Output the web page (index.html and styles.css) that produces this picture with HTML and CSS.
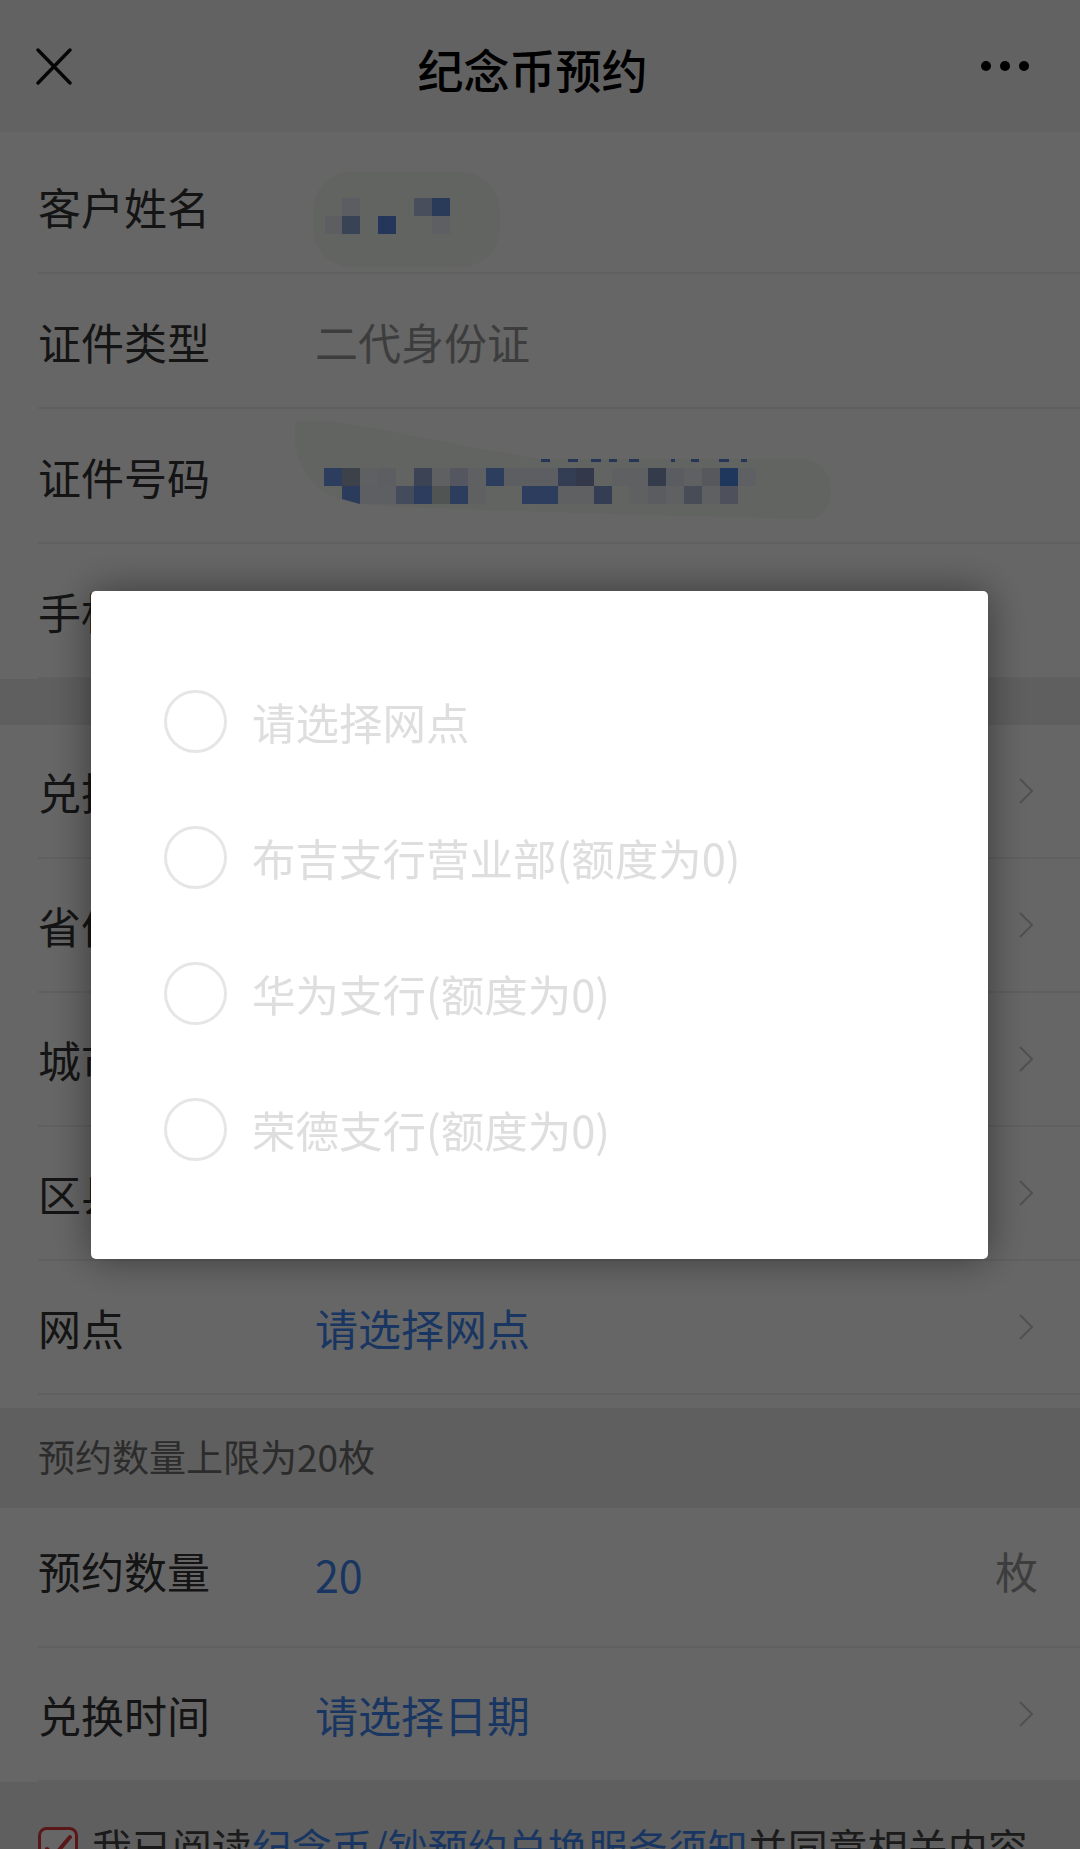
FILE: index.html
```html
<!DOCTYPE html>
<html lang="zh-CN">
<head>
<meta charset="utf-8">
<title>纪念币预约</title>
<link rel="stylesheet" href="styles.css">
</head>
<body>
<div class="page">
  <header class="nav">
    <svg class="ic-close" width="36" height="37" viewBox="0 0 36 37"><path d="M2 2 L34 35 M34 2 L2 35" stroke="#111" stroke-width="3.4" stroke-linecap="round" fill="none"/></svg>
    <h1 class="title">纪念币预约</h1>
    <svg class="ic-more" width="48" height="10" viewBox="0 0 48 10"><circle cx="5" cy="5" r="5" fill="#000"/><circle cx="24" cy="5" r="5" fill="#000"/><circle cx="43" cy="5" r="5" fill="#000"/></svg>
  </header>

  <section class="group g1">
    <div class="row">
      <span class="label">客户姓名</span>
      <svg class="redact r1" width="190" height="135" viewBox="0 0 190 135">
        <rect x="0" y="34" width="187" height="95" rx="38" fill="#f5f9f3"/>
        <rect x="29" y="60" width="18" height="18" fill="#e4e9f4"/>
        <rect x="101" y="60" width="18" height="18" fill="#b5c4e4"/>
        <rect x="119" y="60" width="18" height="18" fill="#6a93e0"/>
        <rect x="12" y="78" width="18" height="18" fill="#e6eaf3"/>
        <rect x="29" y="78" width="18" height="18" fill="#8ea8d8"/>
        <rect x="65" y="78" width="18" height="18" fill="#5a8ae0"/>
        <rect x="119" y="78" width="18" height="18" fill="#eaedf4"/>
      </svg>
    </div>
    <div class="row">
      <span class="label">证件类型</span>
      <span class="value muted">二代身份证</span>
    </div>
    <div class="row">
      <span class="label">证件号码</span>
      <svg class="redact r2" width="550" height="135" viewBox="0 0 550 135">
        <path d="M4 14 C40 6 120 30 248 51 L512 51 C545 53 550 100 522 111 C380 108 150 102 66 96 C20 88 0 55 4 14 Z" fill="#f5f9f3"/>
        <g fill="#5a86d8">
          <rect x="250" y="51" width="9" height="3"/><rect x="277" y="51" width="10" height="3"/><rect x="300" y="51" width="10" height="3"/><rect x="318" y="51" width="8" height="3"/><rect x="338" y="51" width="10" height="3"/><rect x="380" y="51" width="4" height="3"/><rect x="400" y="51" width="8" height="3"/><rect x="428" y="51" width="10" height="3"/><rect x="450" y="51" width="6" height="3"/>
        </g>
        <rect x="33" y="60" width="18" height="18" fill="#6e98e8"/>
        <rect x="51" y="60" width="18" height="18" fill="#98a2b8"/>
        <rect x="69" y="60" width="18" height="18" fill="#eceff6"/>
        <rect x="87" y="60" width="18" height="18" fill="#e6eaf3"/>
        <rect x="123" y="60" width="18" height="18" fill="#94a7d1"/>
        <rect x="141" y="60" width="18" height="18" fill="#eceff6"/>
        <rect x="159" y="60" width="18" height="18" fill="#d2daee"/>
        <rect x="177" y="60" width="18" height="18" fill="#eceff6"/>
        <rect x="195" y="60" width="18" height="18" fill="#6e98e8"/>
        <rect x="213" y="60" width="18" height="18" fill="#e8ecf5"/>
        <rect x="231" y="60" width="18" height="18" fill="#e8ecf5"/>
        <rect x="249" y="60" width="18" height="18" fill="#e8ecf5"/>
        <rect x="267" y="60" width="18" height="18" fill="#7f9bd2"/>
        <rect x="285" y="60" width="18" height="18" fill="#7f8fb8"/>
        <rect x="321" y="60" width="18" height="18" fill="#eceff6"/>
        <rect x="339" y="60" width="18" height="18" fill="#eceff6"/>
        <rect x="357" y="60" width="18" height="18" fill="#8393bb"/>
        <rect x="375" y="60" width="18" height="18" fill="#dfe6f1"/>
        <rect x="393" y="60" width="18" height="18" fill="#eceff6"/>
        <rect x="411" y="60" width="18" height="18" fill="#d8dde8"/>
        <rect x="429" y="60" width="18" height="18" fill="#4f8ae6"/>
        <rect x="447" y="60" width="18" height="18" fill="#eef1f8"/>
        <path d="M51 78 H69 V96 L51 91 Z" fill="#6a94e6"/>
        <rect x="69" y="78" width="18" height="18" fill="#eaedf5"/>
        <rect x="87" y="78" width="18" height="18" fill="#eaedf5"/>
        <rect x="105" y="78" width="18" height="18" fill="#aabde6"/>
        <rect x="123" y="78" width="18" height="18" fill="#6e98e8"/>
        <rect x="141" y="78" width="18" height="18" fill="#c9d2cc"/>
        <rect x="159" y="78" width="18" height="18" fill="#6e98e8"/>
        <rect x="177" y="78" width="18" height="18" fill="#eceff6"/>
        <rect x="231" y="78" width="36" height="18" fill="#6e98e8"/>
        <rect x="267" y="78" width="18" height="18" fill="#eceff6"/>
        <rect x="285" y="78" width="18" height="18" fill="#eceff6"/>
        <rect x="303" y="78" width="18" height="18" fill="#7f9bd2"/>
        <rect x="339" y="78" width="18" height="18" fill="#eceff6"/>
        <rect x="357" y="78" width="18" height="18" fill="#e1e5ee"/>
        <rect x="375" y="78" width="18" height="18" fill="#eceff6"/>
        <rect x="393" y="78" width="18" height="18" fill="#b1bfda"/>
        <rect x="411" y="78" width="18" height="18" fill="#eceff6"/>
        <rect x="429" y="78" width="18" height="18" fill="#c3cbe5"/>
      </svg>
    </div>
    <div class="row">
      <span class="label">手机号码</span>
    </div>
  </section>

  <section class="group g2">
    <div class="row">
      <span class="label">兑换品种</span>
      <span class="value"></span>
      <svg class="chev" width="16" height="28" viewBox="0 0 16 28"><path d="M2 2 L14 14 L2 26" stroke="#c8c8c8" stroke-width="2" fill="none"/></svg>
    </div>
    <div class="row">
      <span class="label">省份</span>
      <span class="value"></span>
      <svg class="chev" width="16" height="28" viewBox="0 0 16 28"><path d="M2 2 L14 14 L2 26" stroke="#c8c8c8" stroke-width="2" fill="none"/></svg>
    </div>
    <div class="row">
      <span class="label">城市</span>
      <span class="value"></span>
      <svg class="chev" width="16" height="28" viewBox="0 0 16 28"><path d="M2 2 L14 14 L2 26" stroke="#c8c8c8" stroke-width="2" fill="none"/></svg>
    </div>
    <div class="row">
      <span class="label">区县</span>
      <span class="value"></span>
      <svg class="chev" width="16" height="28" viewBox="0 0 16 28"><path d="M2 2 L14 14 L2 26" stroke="#c8c8c8" stroke-width="2" fill="none"/></svg>
    </div>
    <div class="row">
      <span class="label">网点</span>
      <span class="value link">请选择网点</span>
      <svg class="chev" width="16" height="28" viewBox="0 0 16 28"><path d="M2 2 L14 14 L2 26" stroke="#c8c8c8" stroke-width="2" fill="none"/></svg>
    </div>
  </section>

  <div class="note">预约数量上限为20枚</div>

  <section class="group g3">
    <div class="row row-qty">
      <span class="label">预约数量</span>
      <span class="value link num">20</span>
      <span class="unit">枚</span>
    </div>
    <div class="row">
      <span class="label">兑换时间</span>
      <span class="value link">请选择日期</span>
      <svg class="chev" width="16" height="28" viewBox="0 0 16 28"><path d="M2 2 L14 14 L2 26" stroke="#c8c8c8" stroke-width="2" fill="none"/></svg>
    </div>
  </section>

  <div class="agree">
    <svg class="check" width="40" height="40" viewBox="0 0 40 40"><rect x="1.5" y="1.5" width="37" height="37" rx="7" fill="#fff" stroke="#e23b3b" stroke-width="3"/><path d="M9 22 L16 29 L32 10" stroke="#e23b3b" stroke-width="4" fill="none" stroke-linecap="round" stroke-linejoin="round"/></svg>
    <p class="agree-text">我已阅读<span class="link">纪念币/钞预约兑换服务须知</span>并同意相关内容</p>
  </div>
</div>

<div class="mask"></div>

<div class="dialog">
  <div class="option"><span class="radio"></span><span class="opt-text">请选择网点</span></div>
  <div class="option"><span class="radio"></span><span class="opt-text">布吉支行营业部(额度为0)</span></div>
  <div class="option"><span class="radio"></span><span class="opt-text">华为支行(额度为0)</span></div>
  <div class="option"><span class="radio"></span><span class="opt-text">荣德支行(额度为0)</span></div>
</div>
</body>
</html>
```

FILE: styles.css
```css
html, body {
  margin: 0;
  padding: 0;
}
body {
  width: 1080px;
  height: 1849px;
  overflow: hidden;
  background: #ededed;
  font-family: "Noto Sans CJK SC", "Noto Sans", sans-serif;
  color: #333;
}
.page {
  width: 1080px;
}
.nav {
  display: grid;
  grid-template-columns: 1fr auto 1fr;
  align-items: center;
  height: 132px;
  padding: 0 51px 0 36px;
  box-sizing: border-box;
  background: #f5f5f5;
}
.ic-close { justify-self: start; display: block; }
.ic-more { justify-self: end; display: block; }
.title {
  margin: 4px 0 0;
  font-size: 46px;
  font-weight: 500;
  line-height: 1;
  color: #000;
}
.group {
  background: #fff;
}
.g1 { padding-top: 7px; }
.g2 { margin-top: 46px; padding-bottom: 13px; }
.row {
  display: flex;
  align-items: center;
  height: 135px;
  margin-left: 38px;
  padding-right: 46px;
  box-sizing: border-box;
  border-bottom: 2px solid #efefef;
  font-size: 43px;
}
.g2 .row { height: 134px; }
.g3 .row { height: 134px; }
.g3 .row-qty { height: 140px; padding-bottom: 14px; }
.label {
  flex: 0 0 277px;
  color: #333;
  white-space: nowrap;
}
.value {
  flex: 1;
  white-space: nowrap;
}
.muted { color: #9a9a9a; }
.link { color: #4088f5; }
.num { padding-top: 8px; }
.unit { color: #9a9a9a; margin-right: -4px; }
.chev { display: block; flex: 0 0 auto; }
.redact { display: block; flex: 0 0 auto; }
.r1 { margin-left: -2px; }
.r2 { margin-left: -24px; }
.note {
  display: flex;
  align-items: center;
  height: 100px;
  padding: 0 0 4px 38px;
  box-sizing: border-box;
  font-size: 37px;
  color: #6e6e6e;
}
.agree {
  display: flex;
  align-items: flex-start;
  gap: 14px;
  padding: 34px 38px 0;
}
.check { display: block; flex: 0 0 auto; margin-top: 11px; }
.agree-text {
  margin: 0;
  font-size: 40px;
  line-height: 60px;
  color: #444;
  white-space: nowrap;
}
.mask {
  position: fixed;
  inset: 0;
  background: rgba(0, 0, 0, 0.6);
  z-index: 10;
}
.dialog {
  position: fixed;
  left: 91px;
  top: 591px;
  width: 897px;
  padding: 62px 73px;
  box-sizing: border-box;
  background: #fff;
  border-radius: 5px;
  box-shadow: 0 0 40px rgba(0, 0, 0, 0.45);
  z-index: 11;
}
.option {
  display: flex;
  align-items: center;
  gap: 25px;
  height: 136px;
}
.radio {
  flex: 0 0 auto;
  width: 63px;
  height: 63px;
  box-sizing: border-box;
  border: 3px solid #e6e6e6;
  border-radius: 50%;
}
.opt-text {
  font-family: "Noto Sans CJK SC", sans-serif;
  font-size: 43.5px;
  color: #dedede;
  white-space: nowrap;
}
```
